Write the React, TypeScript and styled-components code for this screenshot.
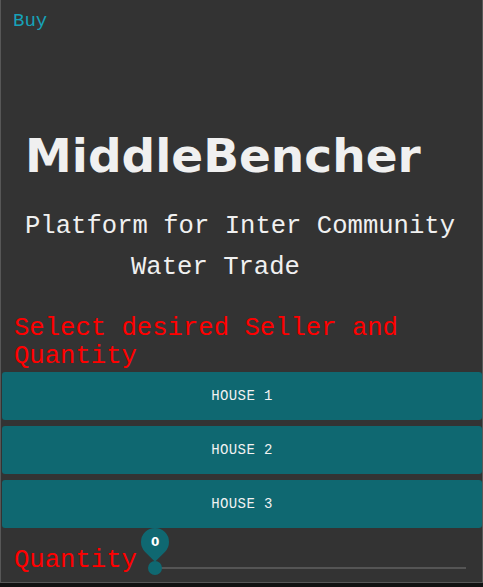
import React from "react"
import styled, { createGlobalStyle } from "styled-components"

const GlobalStyle = createGlobalStyle`
	html, body {
		margin: 0;
		padding: 0;
		background: #111111;
	}
`

const mono = `"Courier New", "Nimbus Mono PS", "Nimbus Mono L", FreeMono, Courier, "Liberation Mono", monospace`

const houses = ["House 1", "House 2", "House 3"]

const App: React.FC = () => {
	const quantity = 0
	return (
		<>
			<GlobalStyle />
			<Frame>
				<BuyLink>Buy</BuyLink>
				<Title>MiddleBencher</Title>
				<Subtitle>
					<SubLine indent={24}>Platform for Inter Community</SubLine>
					<SubLine indent={130}>Water Trade</SubLine>
				</Subtitle>
				<Prompt>Select desired Seller and Quantity</Prompt>
				<HouseList>
					{houses.map((house) => (
						<HouseButton key={house}>{house}</HouseButton>
					))}
				</HouseList>
				<QuantityRow>
					<QuantityLabel>Quantity</QuantityLabel>
					<Slider>
						<Rail />
						<Thumb>
							<ValueLabel>
								<ValueText>{quantity}</ValueText>
							</ValueLabel>
						</Thumb>
					</Slider>
				</QuantityRow>
			</Frame>
		</>
	)
}

export default App

const Frame = styled.div`
	box-sizing: border-box;
	width: 483px;
	height: 583px;
	background: #333333;
	border: 1px solid #575757;
	border-top: none;
	display: flex;
	flex-direction: column;
	font-family: ${mono};
`

const BuyLink = styled.a`
	align-self: flex-start;
	margin: 10px 0 0 12px;
	font-size: 19px;
	color: #17a2b8;
	cursor: pointer;
`

const Title = styled.h1`
	margin: 96px 0 0 24px;
	font-family: "DejaVu Sans", Verdana, sans-serif;
	font-weight: bold;
	font-size: 47px;
	line-height: 56px;
	color: #f0f0f0;
`

const Subtitle = styled.h2`
	margin: 22px 0 0 0;
	font-weight: normal;
	font-size: 25.6px;
	line-height: 41px;
	color: #f0f0f0;
`

const SubLine = styled.span<{ indent: number }>`
	display: block;
	padding-left: ${(p) => p.indent}px;
`

const Prompt = styled.h3`
	margin: 27px 0 0 0;
	padding: 0 13px;
	font-weight: normal;
	font-size: 25.6px;
	line-height: 28px;
	color: #ff0000;
`

const HouseList = styled.div`
	display: flex;
	flex-direction: column;
	gap: 6px;
	margin: 1px 0 0 1px;
`

const HouseButton = styled.button`
	height: 48px;
	border: none;
	border-radius: 3px;
	background: #0f6871;
	color: #f2f2f2;
	font-family: ${mono};
	font-size: 14px;
	text-transform: uppercase;
	letter-spacing: 0.02857em;
	cursor: pointer;
`

const QuantityRow = styled.div`
	display: flex;
	align-items: flex-end;
	padding: 0 16px 0 13px;
	margin-top: 18px;
`

const QuantityLabel = styled.span`
	font-size: 25.6px;
	line-height: 29px;
	color: #ff0000;
`

const Slider = styled.div`
	position: relative;
	flex: 1;
	height: 14px;
	margin: 0 0 0 18px;
`

const Rail = styled.div`
	position: absolute;
	left: 0;
	right: 0;
	top: 6px;
	height: 2px;
	background: #555555;
`

const Thumb = styled.span`
	position: absolute;
	left: -7px;
	top: 0;
	width: 14px;
	height: 14px;
	border-radius: 50%;
	background: #0f6871;
`

const ValueLabel = styled.span`
	position: absolute;
	left: -7px;
	top: -33px;
	width: 28px;
	height: 28px;
	display: flex;
	align-items: center;
	justify-content: center;
	border-radius: 50% 50% 50% 0;
	background: #0f6871;
	transform: rotate(-45deg);
`

const ValueText = styled.span`
	transform: rotate(45deg);
	font-family: "DejaVu Sans", Verdana, sans-serif;
	font-weight: bold;
	font-size: 12px;
	color: #ffffff;
`
